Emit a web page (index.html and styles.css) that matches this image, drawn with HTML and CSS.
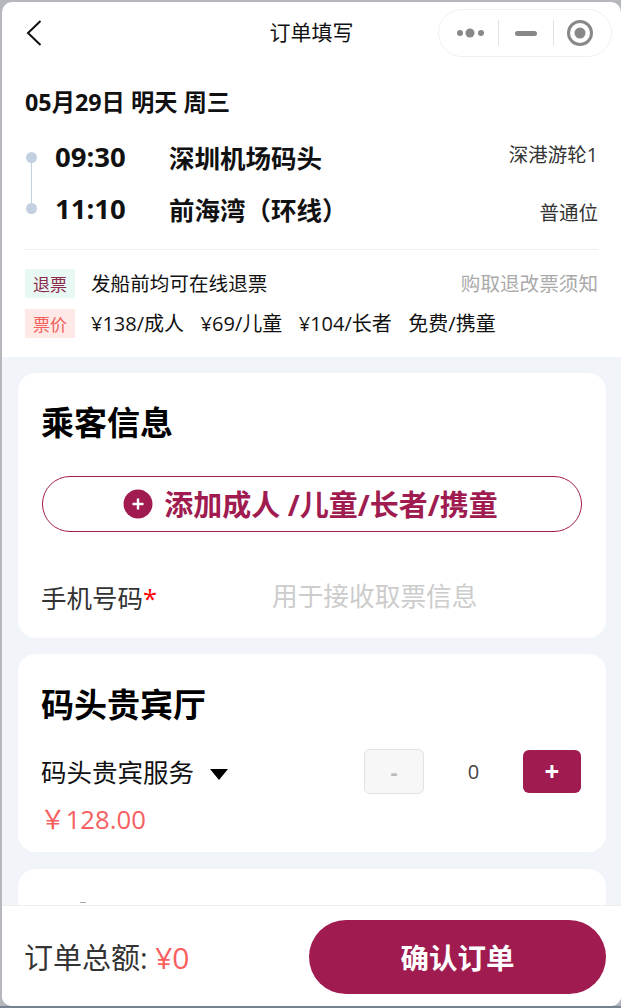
FILE: index.html
```html
<!DOCTYPE html>
<html lang="zh-CN">
<head>
<meta charset="utf-8">
<title>订单填写</title>
<link rel="stylesheet" href="styles.css">
</head>
<body>
<div class="window">
  <header class="nav">
    <svg class="back" width="16" height="26" viewBox="0 0 16 26"><path d="M14.5 1 L2 13 L14.5 25" fill="none" stroke="#111" stroke-width="2"/></svg>
    <h1 class="nav-title">订单填写</h1>
    <div class="capsule">
      <svg class="cap-dots" width="30" height="14" viewBox="0 0 30 14"><circle cx="4" cy="7" r="3" fill="#888"/><circle cx="14" cy="7" r="4.5" fill="#888"/><circle cx="25" cy="7" r="3" fill="#888"/></svg>
      <span class="cap-sep"></span>
      <span class="cap-dash"></span>
      <span class="cap-sep"></span>
      <svg class="cap-target" width="28" height="28" viewBox="0 0 28 28"><circle cx="14" cy="14" r="11.5" fill="none" stroke="#888" stroke-width="3"/><circle cx="14" cy="14" r="5.5" fill="#888"/></svg>
    </div>
  </header>
  <main class="scroller">
    <section class="trip">
      <div class="date">05月29日 明天 周三</div>
      <div class="route">
        <div class="timeline"><span class="dot"></span><span class="rail"></span><span class="dot"></span></div>
        <div class="stops">
          <div class="stop">
            <span class="time">09:30</span><span class="place">深圳机场码头</span><span class="side side-up">深港游轮1</span>
          </div>
          <div class="stop">
            <span class="time">11:10</span><span class="place">前海湾（环线）</span><span class="side side-down">普通位</span>
          </div>
        </div>
      </div>
      <div class="rules">
        <div class="rule">
          <span class="tag tag-refund">退票</span><span class="rule-text">发船前均可在线退票</span><span class="rule-link">购取退改票须知</span>
        </div>
        <div class="rule">
          <span class="tag tag-price">票价</span>
          <span class="fares"><span>¥138/成人</span><span>¥69/儿童</span><span>¥104/长者</span><span>免费/携童</span></span>
        </div>
      </div>
    </section>
    <section class="card card-passenger">
      <h2 class="card-title">乘客信息</h2>
      <button class="add-btn">
        <svg width="30" height="30" viewBox="0 0 30 30"><circle cx="15" cy="15" r="14.5" fill="#a01c50"/><path d="M15 9.5v11M9.5 15h11" stroke="#fff" stroke-width="2.4"/></svg>
        <span class="add-label">添加成人 /儿童/长者/携童</span>
      </button>
      <div class="field">
        <span class="field-label">手机号码<span class="req">*</span></span>
        <span class="placeholder">用于接收取票信息</span>
      </div>
    </section>
    <section class="card card-lounge">
      <h2 class="card-title">码头贵宾厅</h2>
      <div class="lounge-row">
        <span class="lounge-name">码头贵宾服务</span>
        <svg class="caret" width="18" height="11" viewBox="0 0 18 11"><path d="M0 0H18L9 11Z" fill="#000"/></svg>
        <div class="stepper">
          <button class="step step-minus">-</button>
          <span class="count">0</span>
          <button class="step step-plus">+</button>
        </div>
      </div>
      <div class="lounge-price">￥128.00</div>
    </section>
    <section class="card card-next"></section>
  </main>
  <footer class="footer">
    <div class="total">订单总额: <span class="amount">¥0</span></div>
    <button class="confirm">确认订单</button>
  </footer>
</div>
</body>
</html>
```

FILE: styles.css
```css
* { box-sizing: border-box; }
html, body { margin: 0; height: 1008px; overflow: hidden; }
body {
  padding: 2px 0 2px 2px;
  background: linear-gradient(#b4b7bb 1006px, #76828f 1006px);
  font-family: "Open Sans", "Noto Sans CJK SC", sans-serif;
  color: #111;
}
h1, h2 { margin: 0; }
button { font-family: inherit; cursor: pointer; }

.window {
  height: 1004px;
  display: flex;
  flex-direction: column;
  background: #fff;
  border-radius: 10px;
  overflow: hidden;
}

.nav {
  flex: none;
  height: 60px;
  display: flex;
  align-items: center;
  position: relative;
  padding: 0 9px 0 24px;
}
.back { flex: none; margin-top: 2px; }
.nav-title {
  position: absolute;
  left: 0; right: 0; top: 0;
  text-align: center;
  font-size: 21px;
  font-weight: 400;
  line-height: 60px;
}
.capsule {
  margin-left: auto;
  width: 174px;
  height: 48px;
  margin-top: 2px;
  border: 1px solid #f0f0f0;
  border-radius: 24px;
  display: flex;
  align-items: center;
  padding-left: 17px;
  background: #fff;
  position: relative;
}
.cap-dots { margin-right: 12px; }
.cap-sep { width: 1px; height: 26px; background: #e2e2e2; }
.cap-dash { width: 22px; height: 5px; margin: 0 16px; border-radius: 3px; background: #888; }
.cap-target { margin-left: 12px; }

.scroller { flex: 1; min-height: 0; overflow: hidden; background: #f1f4f9; }

.trip { background: #fff; padding: 24px 23px 0; height: 295px; }
.date { font-size: 23.3px; font-weight: 700; line-height: 32px; }
.route { display: flex; margin-top: 12px; height: 120px; border-bottom: 1px solid #efefef; }
.timeline {
  flex: none; width: 12px; display: flex; flex-direction: column; align-items: center;
  padding-top: 22px;
}
.dot { flex: none; width: 11px; height: 11px; border-radius: 50%; background: #c3d0e0; }
.rail { flex: none; width: 1px; height: 40px; background: #c3d0e0; }
.stops { flex: 1; padding-left: 18px; }
.stop { display: flex; align-items: center; height: 52px; }
.time { width: 114px; font-size: 27.5px; font-weight: 700; }
.place { font-size: 25.5px; font-weight: 700; }
.side { margin-left: auto; font-size: 19.5px; color: #333; }
.side-up { margin-bottom: 6px; }
.side-down { margin-top: 6px; }

.rules { padding-top: 19px; display: flex; flex-direction: column; gap: 11px; }
.rule { display: flex; align-items: center; height: 29px; }
.tag { flex: none; width: 50px; height: 29px; display: flex; align-items: center; justify-content: center; font-size: 17px; margin-right: 16px; }
.tag-refund { background: #e8f8f3; color: #8c2a4e; }
.tag-price { background: #ffe9e7; color: #f0605a; }
.rule-text { font-size: 19.6px; margin-bottom: 2px; }
.rule-link { margin-left: auto; margin-bottom: 2px; font-size: 19.6px; color: #aaa; }
.fares { display: flex; gap: 16.5px; font-size: 20px; margin-bottom: 2px; }

.card { margin: 16px 15px 0 16px; background: #fff; border-radius: 18px; padding: 24px; }
.card-title { font-size: 33px; font-weight: 700; line-height: 52px; color: #000; margin-left: -1px; }
.card-passenger { height: 265px; }
.add-btn {
  width: 100%;
  height: 56px;
  margin-top: 27px;
  border: 1px solid #a01c50;
  border-radius: 28px;
  background: #fff;
  color: #a01c50;
  font-size: 29px;
  font-weight: 700;
  display: flex;
  align-items: center;
  justify-content: center;
  gap: 11px;
  padding: 0 3px 0 0;
}
.add-label { margin-bottom: 2px; }
.field { display: flex; align-items: center; margin-top: 39px; height: 50px; }
.field-label { width: 231px; margin-left: -1px; font-size: 25.5px; color: #333; }
.req { color: #f00; }
.placeholder { font-size: 25.7px; color: #ccc; margin-bottom: 3px; }

.card-lounge { height: 198px; padding-top: 25px; }
.lounge-row { display: flex; align-items: center; margin-top: 17px; height: 46px; }
.lounge-name { font-size: 25.5px; margin-left: -1px; margin-bottom: 2px; }
.caret { margin-left: 16px; margin-top: 6px; }
.stepper { margin-left: auto; margin-right: 1px; display: flex; align-items: center; }
.step { height: 45px; border-radius: 6px; padding: 0; font-weight: 700; font-size: 22px; }
.step-minus { width: 60px; background: #f7f7f7; border: 1px solid #e2e2e2; color: #bbb; }
.step-plus { width: 58px; height: 43px; background: #a01c50; border: 0; color: #fff; font-size: 26px; }
.count { width: 99px; text-align: center; font-size: 20px; color: #444; }
.lounge-price { margin-top: 2px; margin-left: -2px; font-size: 25.7px; color: #f56060; line-height: 48px; }

.card-next { height: 200px; margin-top: 17px; padding: 33px 0 0 62px; }
.card-next::before { content: ""; display: block; width: 6px; height: 1px; background: #aaa; }

.footer {
  flex: none;
  height: 101px;
  background: #fff;
  border-top: 1px solid #eee;
  display: flex;
  align-items: center;
  padding: 2px 15px 0 22px;
}
.total { font-size: 29px; color: #333; margin-bottom: 2px; }
.amount { color: #f95f5f; font-size: 30px; }
.confirm {
  margin-left: auto;
  width: 297px;
  height: 74px;
  border: 0;
  border-radius: 37px;
  background: #a01c50;
  color: #fff;
  font-size: 28.5px;
  font-weight: 700;
  padding: 0 0 2px;
}
```
